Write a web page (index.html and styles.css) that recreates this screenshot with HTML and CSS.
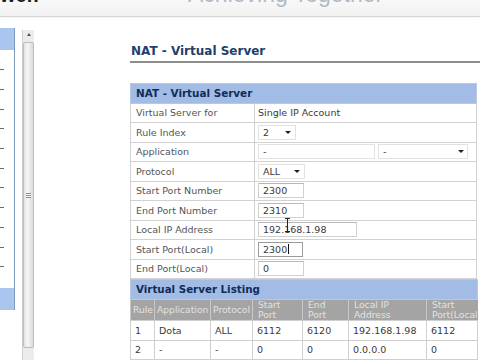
FILE: index.html
```html
<!DOCTYPE html>
<html lang="en">
<head>
  <meta charset="UTF-8">
  <title>NAT - Virtual Server</title>
  <link rel="stylesheet" href="styles.css">
</head>
<body>
  <header class="topbar">
    <span class="brand">wer.</span>
    <span class="slogan">Achieving Together</span>
  </header>

  <div class="layout">
    <nav class="sidenav">
      <div class="nav-head"></div>
      <ul class="nav-list">
        <li></li><li></li><li></li><li></li><li></li><li></li>
        <li></li><li></li><li></li><li></li><li></li>
      </ul>
      <div class="nav-foot"></div>
    </nav>

    <div class="scrollbar">
      <span class="arrow-up"></span>
      <div class="thumb"><span class="grip"></span></div>
    </div>

    <main class="content">
      <h1 class="page-title">NAT - Virtual Server</h1>

      <table class="form-table">
        <colgroup><col class="c-label"><col></colgroup>
        <tr><th colspan="2" class="band">NAT - Virtual Server</th></tr>
        <tr><td class="label">Virtual Server for</td><td class="value">Single IP Account</td></tr>
        <tr><td class="label">Rule Index</td><td class="value"><span class="select sel-rule">2<i class="caret"></i></span></td></tr>
        <tr>
          <td class="label">Application</td>
          <td class="value">
            <div class="pair">
              <span class="select sel-app">-</span>
              <span class="select sel-app2">-<i class="caret"></i></span>
            </div>
          </td>
        </tr>
        <tr><td class="label">Protocol</td><td class="value"><span class="select sel-proto">ALL<i class="caret"></i></span></td></tr>
        <tr><td class="label">Start Port Number</td><td class="value"><span class="input">2300</span></td></tr>
        <tr><td class="label">End Port Number</td><td class="value"><span class="input">2310</span></td></tr>
        <tr><td class="label">Local IP Address</td><td class="value"><span class="input input-ip">192.168.1.98<i class="ibeam"></i></span></td></tr>
        <tr><td class="label">Start Port(Local)</td><td class="value"><span class="input focused">2300<i class="text-caret"></i></span></td></tr>
        <tr><td class="label">End Port(Local)</td><td class="value"><span class="input">0</span></td></tr>
      </table>

      <table class="list-table">
        <colgroup>
          <col class="c-rule"><col class="c-app"><col class="c-proto"><col class="c-sport">
          <col class="c-eport"><col class="c-ip"><col class="c-lport">
        </colgroup>
        <tr><th colspan="7" class="band">Virtual Server Listing</th></tr>
        <tr class="cols">
          <th>Rule</th><th>Application</th><th>Protocol</th><th>Start<br>Port</th>
          <th>End<br>Port</th><th>Local IP<br>Address</th><th>Start<br>Port(Local)</th>
        </tr>
        <tr><td>1</td><td>Dota</td><td>ALL</td><td>6112</td><td>6120</td><td>192.168.1.98</td><td>6112</td></tr>
        <tr><td>2</td><td>-</td><td>-</td><td>0</td><td>0</td><td>0.0.0.0</td><td>0</td></tr>
      </table>
    </main>
  </div>
</body>
</html>
```

FILE: styles.css
```css
* {
  box-sizing: border-box;
}

html, body {
  margin: 0;
  padding: 0;
  width: 480px;
  height: 360px;
  overflow: hidden;
  background: #fff;
  font-family: "DejaVu Sans", Verdana, sans-serif;
  color: #4d4d4d;
}

/* top banner, mostly scrolled out of view */
.topbar {
  display: flex;
  height: 17px;
  overflow: hidden;
  background: linear-gradient(#f8f8f8, #f1f1f1);
  border-bottom: 1px solid #d6d6d6;
  box-shadow: 0 1px 2px rgba(0, 0, 0, 0.06);
}

.brand {
  flex: none;
  width: 188px;
  margin-top: -15px;
  font: bold 20px/20px "Liberation Sans", Arial, sans-serif;
  color: #1e1e1e;
  white-space: nowrap;
}

.slogan {
  margin-top: -17px;
  font: 23px/23px "Liberation Sans", Arial, sans-serif;
  color: #b1bac6;
  white-space: nowrap;
}

.layout {
  display: flex;
  align-items: flex-start;
}

/* left menu frame */
.sidenav {
  flex: none;
  width: 15px;
  margin-top: 11px;
  border-right: 1px solid #7f9aba;
}

.nav-head,
.nav-foot {
  height: 22px;
  background: #a9c6ee;
}

.nav-list {
  list-style: none;
  margin: 0;
  padding: 10px 0 11px;
}

.nav-list li {
  height: 19.7px;
  display: flex;
  align-items: center;
}

.nav-list li::before {
  content: "";
  width: 4px;
  height: 1px;
  background: #6a6a6a;
}

/* frame scrollbar */
.scrollbar {
  flex: none;
  width: 12px;
  height: 340px;
  margin: 13px 0 0 7px;
  background: #ececec;
  border-left: 1px solid #d0d0d0;
  display: flex;
  flex-direction: column;
  align-items: center;
}

.arrow-up {
  margin-top: 3px;
  width: 0;
  height: 0;
  border-left: 2px solid transparent;
  border-right: 2px solid transparent;
  border-bottom: 3px solid #555;
}

.thumb {
  margin-top: 6px;
  width: 11px;
  height: 306px;
  border: 1px solid #bdbdbd;
  border-radius: 2px;
  background: linear-gradient(to right, #e2e2e2, #f6f6f6 40%, #dadada);
  display: flex;
  align-items: center;
  justify-content: center;
}

.grip {
  width: 5px;
  height: 5px;
  border-top: 1px solid #8a8a8a;
  border-bottom: 1px solid #8a8a8a;
  background: linear-gradient(#fff 0 1px, #8a8a8a 1px 2px, #fff 2px) center / 100% 3px no-repeat;
}

/* main frame */
.content {
  flex: 1;
  margin-left: 96px;
}

.page-title {
  margin: 26px 0 0;
  padding: 0 0 2px 1px;
  font-size: 12px;
  line-height: 16px;
  font-weight: bold;
  color: #223f6c;
  border-bottom: 2px solid #8d8d8d;
}

.form-table,
.list-table {
  width: 347px;
  border-collapse: collapse;
  table-layout: fixed;
}

.form-table {
  margin-top: 20px;
}

.c-label { width: 124px; }

.band {
  height: 19.5px;
  padding: 0 0 0 5px;
  text-align: left;
  font-size: 10.4px;
  font-weight: bold;
  color: #112c57;
  background: #a2bce6;
  border: 1px solid #b7c9e4;
}

.form-table td {
  height: 19.5px;
  padding: 0;
  font-size: 9.5px;
  border: 1px solid #d2d2d2;
  white-space: nowrap;
}

.label {
  padding-left: 5px !important;
  color: #555;
}

.value {
  padding-left: 3px !important;
  color: #3a3a3a;
}

.select,
.input {
  position: relative;
  display: inline-flex;
  align-items: center;
  height: 15px;
  padding: 0 4px;
  vertical-align: middle;
  background: #fff;
}

.select {
  justify-content: space-between;
  border: 1px solid #e2e2e2;
}

.caret {
  width: 0;
  height: 0;
  border-left: 3px solid transparent;
  border-right: 3px solid transparent;
  border-top: 3px solid #222;
}

.sel-rule { width: 38px; }
.sel-proto { width: 47px; }
.sel-app { width: 117px; }
.sel-app2 { width: 90px; padding-right: 3px; }

.pair {
  display: flex;
  gap: 3px;
}

.input {
  width: 46px;
  border: 1px solid #d0d0d0;
  border-top-color: #b8b8b8;
}

.input-ip {
  width: 99px;
}

.input.focused {
  width: 45px;
  border-color: #9a9a9a;
}

.text-caret {
  width: 1px;
  height: 10px;
  margin-left: 1px;
  background: #111;
}

/* mouse pointer resting over the IP field */
.ibeam {
  position: absolute;
  left: 26px;
  top: -5px;
  width: 5px;
  height: 14px;
  border-top: 1px solid #222;
  border-bottom: 1px solid #222;
  background: linear-gradient(#222, #222) center / 1px 100% no-repeat;
}

.c-rule { width: 24px; }
.c-app { width: 56px; }
.c-proto { width: 42px; }
.c-sport { width: 50px; }
.c-eport { width: 46px; }
.c-ip { width: 78px; }
.c-lport { width: 51px; }

.list-table .band {
  font-size: 10.3px;
}

.cols th {
  height: 21.5px;
  padding: 0 0 0 2px;
  text-align: left;
  font-size: 9.2px;
  font-weight: normal;
  line-height: 10px;
  color: #e2e2e2;
  background: #a4a4a4;
  border-left: 1px solid #c8c8c8;
  overflow: hidden;
  white-space: nowrap;
}

.cols th:nth-child(n+4) {
  padding-left: 5px;
}

.list-table td {
  height: 19.5px;
  padding: 0 0 0 4px;
  font-size: 9.5px;
  color: #3a3a3a;
  border: 1px solid #cfcfcf;
  white-space: nowrap;
  overflow: hidden;
}
```
